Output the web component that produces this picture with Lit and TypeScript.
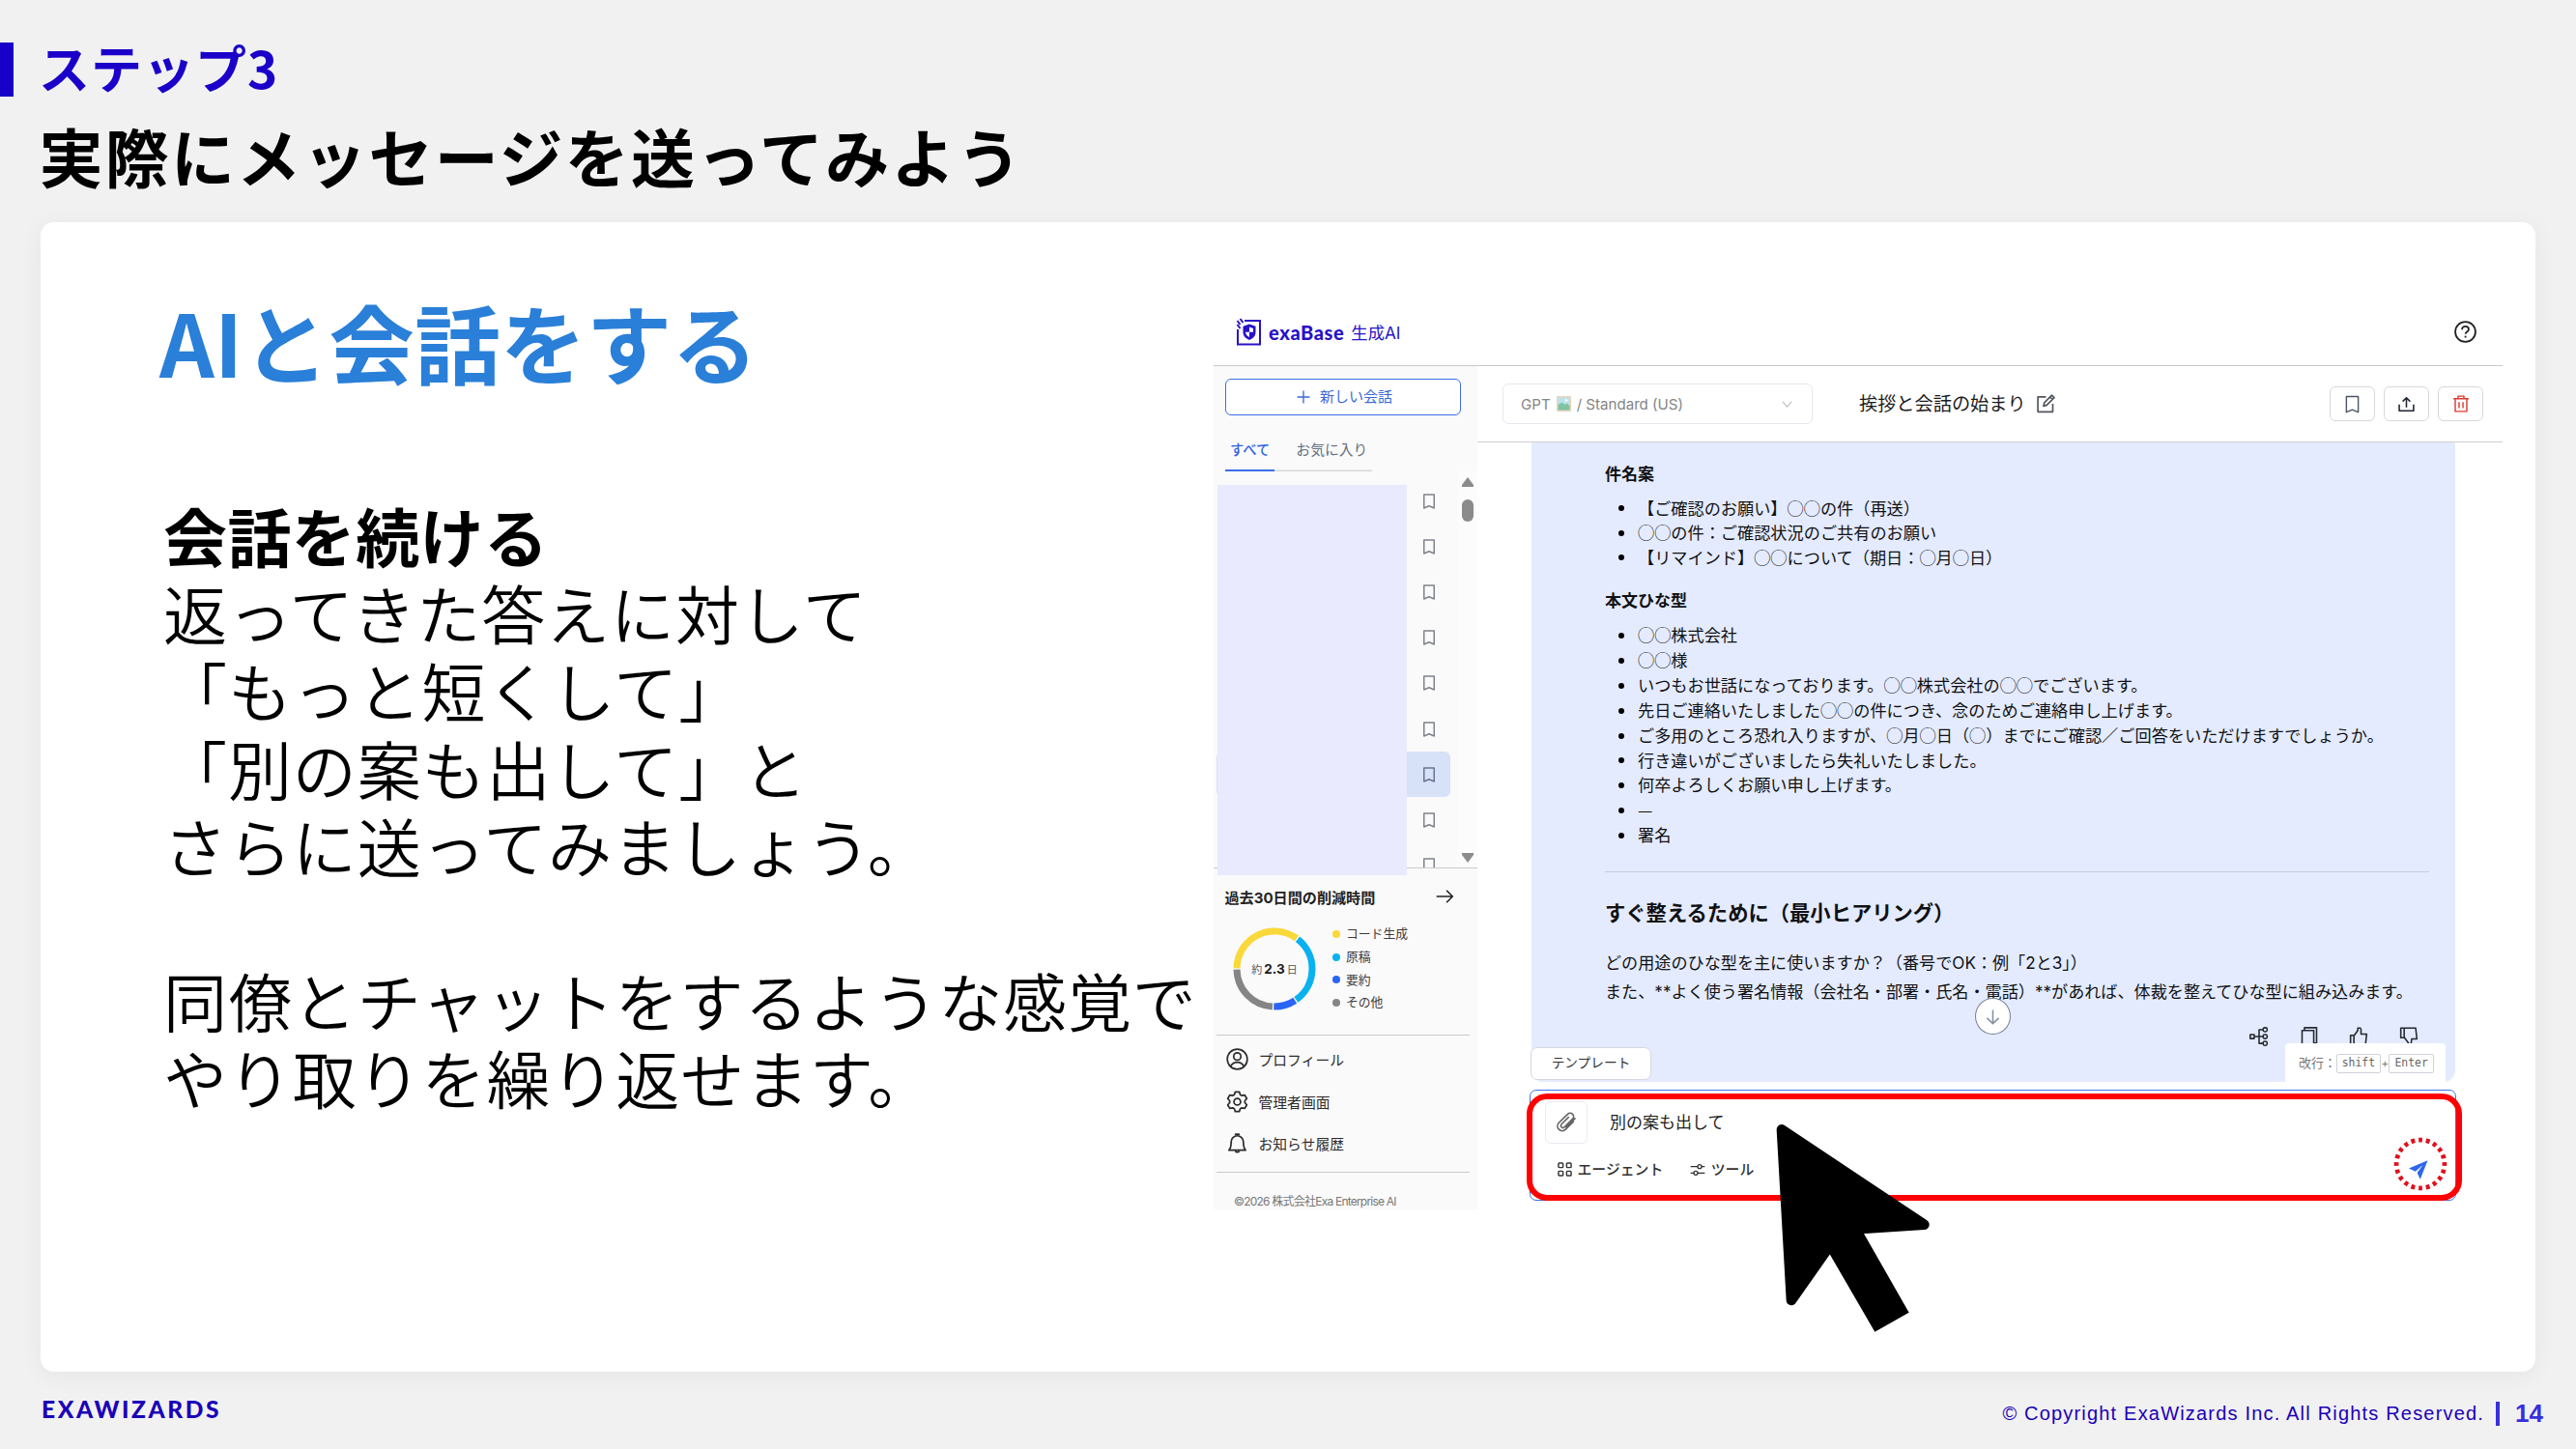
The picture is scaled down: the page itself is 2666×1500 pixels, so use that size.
import { LitElement, html, css, svg } from "lit";
import { customElement, property } from "lit/decorators.js";

const SUBJECTS = [
  "【ご確認のお願い】◯◯の件（再送）",
  "◯◯の件：ご確認状況のご共有のお願い",
  "【リマインド】◯◯について（期日：◯月◯日）",
];

const BODY = [
  "◯◯株式会社",
  "◯◯様",
  "いつもお世話になっております。◯◯株式会社の◯◯でございます。",
  "先日ご連絡いたしました◯◯の件につき、念のためご連絡申し上げます。",
  "ご多用のところ恐れ入りますが、◯月◯日（◯）までにご確認／ご回答をいただけますでしょうか。",
  "行き違いがございましたら失礼いたしました。",
  "何卒よろしくお願い申し上げます。",
  "—",
  "署名",
];

const SHARES = [
  { name: "コード生成", color: "#f9d83a", from: 270, to: 397 },
  { name: "原稿", color: "#09b1f0", from: 37, to: 146 },
  { name: "要約", color: "#2964f4", from: 146, to: 182 },
  { name: "その他", color: "#858585", from: 182, to: 270 },
];

const ICONS: Record<string, unknown> = {
  bookmark: svg`<path d="M5 2.8h14v18.6l-7-3-7 3z"/>`,
  arrow: svg`<path d="M2 12h20M14.500 4.500 22 12l-7.500 7.500"/>`,
  down: svg`<path d="M12 2v20M3.500 14 12 22l8.500-8"/>`,
  plus: svg`<path d="M12 1v22M1 12h22"/>`,
  chevron: svg`<path d="M2 6l10 12L22 6"/>`,
  user: svg`<circle cx="12" cy="12" r="10.800"/><circle cx="12" cy="9" r="3.900"/><path d="M4.800 19.800c1.500-3.200 4-4.600 7.200-4.600s5.700 1.400 7.200 4.600"/>`,
  gear: svg`<path d="M9.800 1.400h4.400l1 3 1.800 1 3.100-.6 2.200 3.800-2.100 2.400v2l2.100 2.400-2.200 3.800-3.100-.6-1.800 1-1 3H9.800l-1-3-1.800-1-3.100.6-2.200-3.800L3.800 13v-2L1.700 8.600l2.200-3.800 3.100.6 1.800-1z"/><circle cx="12" cy="12" r="3.600"/>`,
  bell: svg`<path d="M3 19.500c2-2 2.400-3.500 2.400-9a6.600 6.600 0 0 1 13.200 0c0 5.500.4 7 2.400 9z"/><path d="M10.200 3.400V2.200h3.600v1.200M9.800 20a2.300 2.300 0 0 0 4.400 0"/>`,
  edit: svg`<path d="M12.500 3.500H2.500v18.500h18.500V12"/><path d="M9.500 14.800l1-4.200L19.800 1.300l3 3-9.300 9.300zM17.600 3.600l3 3"/>`,
  upload: svg`<path d="M1.500 12.500v9h21v-9M12 16.500V2.500M6.500 8 12 2.500 17.500 8"/>`,
  trash: svg`<path d="M1.500 5h21M8 4.800V1.500h8v3.300M4 5v17.500h16V5M9.300 9.500v8.500M14.700 9.500v8.500"/>`,
  help: svg`<circle cx="12" cy="12" r="10.900"/><path d="M8.400 9.600c0-2.300 1.500-3.500 3.600-3.500s3.600 1.200 3.600 3.200c0 2.600-3.500 2.600-3.500 5"/><path d="M12.100 16.300v2"/>`,
  tree: svg`<rect x="1" y="9.500" width="5" height="5"/><rect x="17" y="1" width="5" height="5" rx="2"/><rect x="17" y="9.500" width="5" height="5" rx="2"/><rect x="17" y="18" width="5" height="5" rx="2"/><path d="M6 12h11M17 3.500h-5v17h5"/>`,
  copy: svg`<path d="M3 4.500h14.500v19H3z"/><path d="M6 4V1h15v19h-3"/>`,
  thumbUp: svg`<path d="M2 10.500h4.200v12H2zM6.200 11l4.800-6.500V1.500h3.200l.8 1.500v6h7l-1.500 13.500H6.200"/>`,
  thumbDown: svg`<path d="M2 1.500h4.200v12H2zM6.200 13l5.300 7v3h3l1-8h6.500L20.500 1.500H6.200"/>`,
  clip: svg`<path d="M20.500 10.500l-9.300 9.300a5.300 5.300 0 0 1-7.500-7.500L13.600 2.500a3.900 3.900 0 0 1 5.500 0 3.900 3.900 0 0 1 0 5.500l-9.200 9.200a2.300 2.300 0 0 1-3.300-3.300L15 5.600M22.300 7l-11 11"/>`,
  grid: svg`<rect x="1.500" y="1.500" width="7.500" height="7.500" rx="1.500"/><rect x="15" y="1.500" width="7.500" height="7.500" rx="1.500"/><rect x="1.500" y="15" width="7.500" height="7.500" rx="1.500"/><rect x="15" y="15" width="7.500" height="7.500" rx="1.500"/>`,
  sliders: svg`<path d="M1 7h11M18 7h5M1 17h5M12 17h11"/><circle cx="15" cy="7" r="3"/><circle cx="9" cy="17" r="3"/>`,
};

@customElement("ui-icon")
export class UiIcon extends LitElement {
  @property() name = "";
  @property({ type: Number }) size = 20;
  @property({ type: Number }) weight = 2;

  static styles = css`
    :host { display: inline-flex; flex: none; }
    svg { display: block; fill: none; stroke: currentColor; overflow: visible; }
  `;

  render() {
    return html`<svg width=${this.size} height=${this.size} viewBox="0 0 24 24"
      stroke-width=${this.weight} stroke-linejoin="round">${ICONS[this.name]}</svg>`;
  }
}

@customElement("savings-donut")
export class SavingsDonut extends LitElement {
  static styles = css`
    :host { display: block; flex: none; position: relative; width: 86px; height: 86px; }
    svg { display: block; }
    .label {
      position: absolute; inset: 0; display: flex; align-items: center; justify-content: center;
      gap: 2px; font-size: 11px; color: #555;
    }
    .value { font-size: 13.500px; font-weight: 700; color: #1c1c1c; }
  `;

  private arc(from: number, to: number) {
    const at = (deg: number) => {
      const a = ((deg - 90) * Math.PI) / 180;
      return `${43 + 39 * Math.cos(a)} ${43 + 39 * Math.sin(a)}`;
    };
    return `M${at(from + 1)}A39 39 0 0 1 ${at(to - 1)}`;
  }

  render() {
    return html`
      <svg width="86" height="86" viewBox="0 0 86 86" fill="none" stroke-width="7">
        ${SHARES.map((s) => svg`<path d=${this.arc(s.from, s.to)} stroke=${s.color}/>`)}
      </svg>
      <div class="label"><span>約</span><span class="value">2.3</span><span>日</span></div>
    `;
  }
}

@customElement("chat-sidebar")
export class ChatSidebar extends LitElement {
  static styles = css`
    :host {
      display: flex; flex-direction: column; position: relative; box-sizing: border-box;
      width: 273px; padding-top: 13px; background: #fafafa; overflow: hidden; color: #333;
    }
    .new {
      box-sizing: border-box; width: 244px; height: 38px; margin-left: 12px; flex: none;
      display: flex; align-items: center; justify-content: center; gap: 10px; padding: 0 0 4px 3px;
      border: 1.500px solid #3b6fe8; border-radius: 6px; background: #fff;
      color: #3b68d8; font-size: 15px;
    }
    .new ui-icon { margin-top: 3px; }
    .tabs {
      display: flex; gap: 17px; align-self: flex-start; flex: none; box-sizing: border-box;
      height: 44px; margin: 14px 0 0 12px; font-size: 14.800px; line-height: 44px;
      box-shadow: inset 0 -1.500px #d6d8dc; color: #65717f;
    }
    .tab { padding: 0 5px; }
    .active { color: #2f64e6; font-weight: 500; box-shadow: inset 0 -2px #3b6fe8; font-size: 14.300px; }
    .list { display: flex; height: 411px; flex: none; overflow: hidden; box-sizing: border-box; border-bottom: 1px solid #c9cacd; }
    .rows { width: 242px; margin: 7px 7px 0 3px; }
    .row {
      display: flex; align-items: center; justify-content: flex-end; box-sizing: border-box;
      height: 47.200px; padding-right: 13.500px; border-radius: 6px; color: #80838c;
    }
    .selected { background: #d7e1f8; color: #68758f; }
    .scroll { width: 21px; background: #fcfcfc; display: flex; flex-direction: column; align-items: center; padding: 6px 0 5px; color: #8b8b8b; }
    .thumb { width: 12px; height: 23px; border-radius: 6px; background: #8b8b8b; margin: 13px 0 auto; }
    .mask { position: absolute; left: 4px; top: 123px; width: 196px; height: 404px; background: #e9eafe; }
    .head { display: flex; align-items: center; justify-content: space-between; height: 30px; flex: none; margin: 14px 24px 0 11.500px; font-size: 15.100px; font-weight: 700; color: #222; }
    .chart { display: flex; align-items: center; height: 86px; margin: 17px 0 0 20px; flex: none; }
    .legend { margin: -1px 0 0 17px; font-size: 12.800px; line-height: 23.700px; color: #3c3c3c; }
    .item { display: flex; align-items: center; gap: 6px; }
    .dot { width: 8px; height: 8px; border-radius: 50%; }
    .rule { height: 1px; flex: none; background: #c9c9cc; margin: 0 8px 0 3px; }
    .stats-rule { margin-top: 25px; }
    .menu { display: flex; flex-direction: column; flex: none; padding: 3px 0 7px 13px; }
    .entry { display: flex; align-items: center; gap: 10.500px; height: 43.500px; font-size: 14.800px; color: #2c2c2c; }
    .copy { font-size: 12px; line-height: 20px; margin: 20px 0 0 21px; color: #777; letter-spacing: -0.780px; white-space: nowrap; }
  `;

  render() {
    return html`
      <div class="new"><ui-icon name="plus" size="14" weight="2.300"></ui-icon>新しい会話</div>
      <div class="tabs"><span class="tab active">すべて</span><span class="tab">お気に入り</span></div>
      <div class="list">
        <div class="rows">
          ${Array.from({ length: 9 }, (_, i) => html`
            <div class="row ${i === 6 ? "selected" : ""}"><ui-icon name="bookmark" size="18" weight="2"></ui-icon></div>`)}
        </div>
        <div class="scroll">
          <svg width="12" height="10" viewBox="0 0 12 10"><path d="M6 0l6 8v2H0V8z" fill="currentColor"/></svg>
          <div class="thumb"></div>
          <svg width="12" height="10" viewBox="0 0 12 10"><path d="M6 10l6-8V0H0v2z" fill="currentColor"/></svg>
        </div>
      </div>
      <div class="head">過去30日間の削減時間<ui-icon name="arrow" size="20" weight="1.900"></ui-icon></div>
      <div class="chart">
        <savings-donut></savings-donut>
        <div class="legend">
          ${SHARES.map((s) => html`<div class="item"><span class="dot" style="background:${s.color}"></span>${s.name}</div>`)}
        </div>
      </div>
      <div class="rule stats-rule"></div>
      <div class="menu">
        <div class="entry"><ui-icon name="user" size="23" weight="1.800"></ui-icon>プロフィール</div>
        <div class="entry"><ui-icon name="gear" size="23" weight="1.800"></ui-icon>管理者画面</div>
        <div class="entry"><ui-icon name="bell" size="23" weight="1.800"></ui-icon>お知らせ履歴</div>
      </div>
      <div class="rule"></div>
      <div class="copy">©2026 株式会社Exa Enterprise AI</div>
      <div class="mask"></div>
    `;
  }
}

@customElement("chat-main")
export class ChatMain extends LitElement {
  static styles = css`
    :host { display: flex; flex-direction: column; position: relative; width: 1061px; color: #101114; }
    .bar { display: flex; align-items: center; height: 79px; box-sizing: border-box; border-bottom: 1px solid #cfcfd3; padding: 0 20px 0 26px; flex: none; }
    .model {
      display: flex; align-items: center; box-sizing: border-box; width: 321px; height: 42px; padding: 0 20px 0 18px;
      border: 1.500px solid #e6e8ee; border-radius: 6px; font-size: 15.100px; color: #858585; gap: 6px;
    }
    .pic { display: block; flex: none; }
    .chev { margin-left: auto; color: #b4b4b4; display: flex; }
    .title { display: flex; align-items: center; gap: 10px; margin: -2px 0 0 48px; font-size: 19.200px; color: #1c1c1c; }
    .title ui-icon { color: #50545c; margin-top: 1px; }
    .tools { display: flex; gap: 9px; margin-left: auto; }
    .tool { display: flex; align-items: center; justify-content: center; box-sizing: border-box; width: 47px; height: 36px; border: 1.500px solid #d8d8da; border-radius: 6px; background: #fff; color: #1d2433; }
    .mark { color: #4d5566; }
    .danger { color: #dc3a30; }
    .answer { display: flex; flex-direction: column; box-sizing: border-box; width: 956px; height: 661.500px; margin-left: 55.500px; padding: 19.500px 26px 0 76.500px; background: #e4ebfe; border-radius: 0 0 12px 12px; flex: none; font-size: 17.180px; }
    .sub { font-weight: 700; line-height: 26px; font-size: 17px; }
    .sub + .points { margin-top: 9px; }
    .points + .sub { margin-top: 20px; }
    .points { margin: 0; padding: 0; list-style: none; line-height: 25.500px; font-family: "Noto Sans CJK JP", sans-serif; }
    .long { line-height: 25.900px; }
    .points li { display: flex; align-items: center; white-space: nowrap; }
    .points li::before { content: ""; width: 6px; height: 6px; border-radius: 50%; background: #000; margin: 2px 14px 0 14px; flex: none; }
    .hr { height: 1px; background: #c6ccdb; margin: 25px 1px 0 0; flex: none; }
    .big { font-size: 21.300px; font-weight: 700; line-height: 34px; margin-top: 25px; }
    .para { font-size: 17.130px; line-height: 29.600px; margin-top: 20px; white-space: nowrap; }
    .actions { display: flex; gap: 31.500px; justify-content: flex-end; margin: 21.500px 12px 0 0; color: #252932; }
    .jump { position: absolute; left: 515px; top: 654px; width: 37px; height: 38px; box-sizing: border-box; border: 1.500px solid #727d90; border-radius: 50%; background: #fff; color: #8490a0; display: flex; align-items: center; justify-content: center; }
    .template { position: absolute; left: 55px; top: 705px; width: 125px; height: 34px; box-sizing: border-box; border: 1.500px solid #d6d8e0; border-radius: 7px; background: #fff; font-size: 13.700px; color: #333; display: flex; align-items: center; justify-content: center; padding-bottom: 4px; }
    .hint { position: absolute; left: 836px; top: 700.500px; width: 166px; height: 40.500px; box-sizing: border-box; padding: 3px 12px 0 14px; border-radius: 4px 4px 0 0; background: #fff; font-size: 13px; color: #777; display: flex; align-items: center; white-space: nowrap; }
    .hint kbd { box-sizing: border-box; width: 47px; height: 20px; text-align: center; border: 1.500px solid #cfd1da; border-radius: 2px; font: 11.400px/17px "DejaVu Sans Mono", monospace; color: #666; }
    .hint .colon { width: 38.500px; margin-top: -3px; }
    .hint .plus { width: 8px; text-align: center; font-size: 11.500px; }
    .input { box-sizing: border-box; position: relative; width: 959px; height: 115px; margin: 8px 0 0 54px; border: 1.500px solid #3f6fe4; border-radius: 7px; background: #fff; padding: 11px 0 0 14.500px; }
    .line { display: flex; align-items: center; gap: 23px; font-size: 17px; color: #222; }
    .line span { margin-top: -2px; }
    .attach { box-sizing: border-box; width: 44.500px; height: 44.500px; border: 1.500px solid #e9ebf2; border-radius: 6px; display: flex; align-items: center; justify-content: center; color: #666; }
    .modes { display: flex; gap: 28px; margin: 14.500px 0 0 13.500px; font-size: 14.850px; font-weight: 500; color: #333; line-height: 24px; }
    .mode { display: flex; align-items: center; gap: 5.500px; }
    .plane { position: absolute; right: 28px; bottom: 21px; display: block; }
    .frame { position: absolute; left: 51px; top: 753px; width: 968px; height: 110.500px; box-sizing: border-box; border: 6.500px solid #ff0000; border-radius: 21px; }
    .ring { position: absolute; left: 948px; top: 798px; }
    .cursor { position: absolute; left: 291px; top: 771px; }
  `;

  render() {
    return html`
      <div class="bar">
        <div class="model">
          GPT
          <svg class="pic" width="15" height="16" viewBox="0 0 15 16">
            <rect width="15" height="16" rx="1" fill="#ecd2b8"/>
            <rect x="1.500" y="1.500" width="12" height="13" fill="#b9e3ee"/>
            <path d="M1.500 9l4-2.500 3 2.500 2-1.500 3 2.500v4.500h-12z" fill="#7fc3a0"/>
            <circle cx="10" cy="4.500" r="1.300" fill="#fff"/>
          </svg>
          / Standard (US)
          <span class="chev"><ui-icon name="chevron" size="11" weight="2.400"></ui-icon></span>
        </div>
        <div class="title">挨拶と会話の始まり<ui-icon name="edit" size="20" weight="2"></ui-icon></div>
        <div class="tools">
          <div class="tool mark"><ui-icon name="bookmark" size="21" weight="1.600"></ui-icon></div>
          <div class="tool"><ui-icon name="upload" size="17" weight="2.200"></ui-icon></div>
          <div class="tool danger"><ui-icon name="trash" size="18" weight="1.900"></ui-icon></div>
        </div>
      </div>
      <div class="answer">
        <div class="sub">件名案</div>
        <ul class="points">${SUBJECTS.map((t) => html`<li>${t}</li>`)}</ul>
        <div class="sub">本文ひな型</div>
        <ul class="points long">${BODY.map((t) => html`<li>${t}</li>`)}</ul>
        <div class="hr"></div>
        <div class="big">すぐ整えるために（最小ヒアリング）</div>
        <div class="para">
          どの用途のひな型を主に使いますか？（番号でOK：例「2と3」）<br>また、**よく使う署名情報（会社名・部署・氏名・電話）**があれば、体裁を整えてひな型に組み込みます。
        </div>
        <div class="actions">
          <ui-icon name="tree" size="20" weight="1.900"></ui-icon>
          <ui-icon name="copy" size="20" weight="1.900"></ui-icon>
          <ui-icon name="thumbUp" size="20" weight="1.900"></ui-icon>
          <ui-icon name="thumbDown" size="20" weight="1.900"></ui-icon>
        </div>
      </div>
      <div class="input">
        <div class="line"><div class="attach"><ui-icon name="clip" size="22" weight="1.800"></ui-icon></div><span>別の案も出して</span></div>
        <div class="modes">
          <span class="mode"><ui-icon name="grid" size="15" weight="2.300"></ui-icon>エージェント</span>
          <span class="mode"><ui-icon name="sliders" size="16" weight="2"></ui-icon>ツール</span>
        </div>
        <svg class="plane" width="20" height="20" viewBox="0 0 20 20"><path d="M19.500.3L0 8.500l6.800 3.200L14.500 5 8.600 13l3.200 6.700z" fill="#2f66ea"/></svg>
      </div>
      <div class="jump"><ui-icon name="down" size="17" weight="2.200"></ui-icon></div>
      <div class="template">テンプレート</div>
      <div class="hint"><span class="colon">改行：</span><kbd>shift</kbd><span class="plus">+</span><kbd>Enter</kbd></div>
      <div class="frame"></div>
      <svg class="ring" width="56" height="56" viewBox="0 0 56 56" fill="none">
        <circle cx="28" cy="28" r="24.900" stroke="#e0101c" stroke-width="4.700" pathLength="40" stroke-dasharray="1 1" stroke-dashoffset=".5"/>
      </svg>
      <svg class="cursor" width="200" height="240" viewBox="0 0 600 720">
        <path d="M72 58L514 353 318 366 220 420 102 588z" stroke="#000" stroke-width="32" stroke-linejoin="round"/>
        <path d="M180 374L287 311 467 626 361 686z"/>
      </svg>
    `;
  }
}

@customElement("app-root")
export class AppRoot extends LitElement {
  static styles = css`
    :host {
      display: flex; flex-direction: column; box-sizing: border-box; width: 2666px; height: 1500px;
      overflow: hidden; background: #f1f1f1; font-family: "Noto Sans CJK JP", sans-serif; color: #000;
    }
    .step { display: flex; gap: 26px; height: 56px; margin-top: 44px; color: #1a00c8; font-size: 53px; font-weight: 700; letter-spacing: 1px; line-height: 51px; }
    .step::before { content: ""; width: 14px; height: 56px; background: #1800c8; }
    .headline { margin: 14px 0 0 40.500px; height: 92px; line-height: 92px; font-size: 66px; font-weight: 700; letter-spacing: 2.200px; }
    .card { display: flex; box-sizing: border-box; width: 2582px; height: 1190px; margin: 24px 0 0 42px; border-radius: 14px; background: #fff; box-shadow: 0 4px 26px rgba(0, 0, 0, 0.05); flex: none; }
    .copy { width: 1214px; flex: none; box-sizing: border-box; padding: 62px 0 0 127px; white-space: nowrap; }
    .lead { font-size: 88.500px; font-weight: 700; line-height: 120px; letter-spacing: 0.300px; color: #2a7fd8; margin-left: -4px; }
    .body { margin-top: 107px; font-family: "Liberation Sans", "Noto Sans CJK JP", sans-serif; font-size: 66px; font-weight: 350; line-height: 80.200px; letter-spacing: 0.900px; }
    .body b { font-weight: 700; letter-spacing: 0.400px; }
    .app { display: flex; flex-direction: column; width: 1334px; height: 936px; margin-top: 86px; font-family: Inter, "Noto Sans CJK JP", sans-serif; }
    .top { display: flex; align-items: center; justify-content: space-between; box-sizing: border-box; height: 63px; flex: none; padding: 0 27px 7px 23px; border-bottom: 1px solid #c9cacd; color: #222; }
    .brand { display: flex; align-items: center; color: #2812c8; font-size: 17.300px; }
    .name { font-family: Lato, sans-serif; font-weight: 900; font-size: 20px; letter-spacing: 0.600px; margin: 0 7px 0 7px; }
    .split { display: flex; flex: 1; min-height: 0; }
    .foot { display: flex; align-items: center; justify-content: space-between; padding: 0 34px 0 43px; height: 80px; color: #1a00b8; }
    .mark { font: 900 24.500px/30px Lato, sans-serif; letter-spacing: 2.600px; margin-top: -2px; }
    .legal { display: flex; align-items: center; font: 20px/30px "Liberation Sans", sans-serif; letter-spacing: 1.190px; margin-top: 6px; }
    .page { display: flex; align-items: center; font-size: 26px; font-weight: 700; letter-spacing: 0; color: #372fdc; margin-left: 12px; gap: 16px; }
    .page::before { content: ""; width: 4px; height: 25px; background: currentColor; }
  `;

  render() {
    return html`
      <div class="step">ステップ3</div>
      <div class="headline">実際にメッセージを送ってみよう</div>
      <div class="card">
        <div class="copy">
          <div class="lead">AIと会話をする</div>
          <div class="body">
            <b>会話を続ける</b><br>返ってきた答えに対して<br>「もっと短くして」<br>「別の案も出して」と<br>さらに送ってみましょう。<br><br>同僚とチャットをするような感覚で<br>やり取りを繰り返せます。
          </div>
        </div>
        <div class="app">
          <div class="top">
            <div class="brand">
              <svg width="27" height="29" viewBox="0 0 27 29" fill="none" stroke="currentColor" stroke-width="2">
                <path d="M9 3h16v24.500H2V12M1.500 3l3 4M1.500 7l3 4M4.500 1l3 4"/>
                <path d="M14 6.500l6.500 2.300v6c0 4-2.500 6.500-6.500 8.200-4-1.700-6.500-4.200-6.500-8.200v-6z" fill="currentColor" stroke="none"/>
                <path d="M14 9.500v5.300h4V11zM14 14.800H10c.2 2.400 1.800 4.200 4 5.200z" fill="#fff" stroke="none"/>
              </svg>
              <span class="name">exaBase</span>生成AI
            </div>
            <ui-icon name="help" size="23" weight="1.900"></ui-icon>
          </div>
          <div class="split">
            <chat-sidebar></chat-sidebar>
            <chat-main></chat-main>
          </div>
        </div>
      </div>
      <div class="foot">
        <div class="mark">EXAWIZARDS</div>
        <div class="legal">© Copyright ExaWizards Inc. All Rights Reserved.<span class="page">14</span></div>
      </div>
    `;
  }
}
